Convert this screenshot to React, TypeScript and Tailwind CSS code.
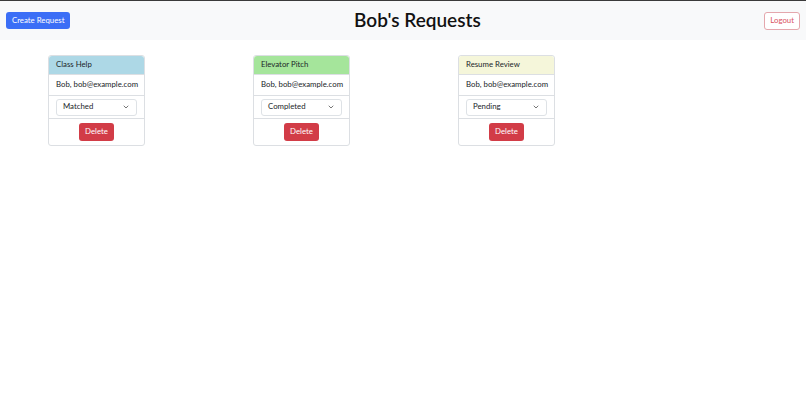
import { ChevronDown } from "lucide-react";

const requests = [
  { title: "Class Help", status: "Matched", header: "bg-[#add8e6]" },
  { title: "Elevator Pitch", status: "Completed", header: "bg-[#a5e59b]" },
  { title: "Resume Review", status: "Pending", header: "bg-[#f5f6da]" },
];

function RequestCard({ title, status, header }: { title: string; status: string; header: string }) {
  return (
    <div className="flex w-[97px] flex-col whitespace-nowrap rounded-[3px] border border-[#dcdfe3] bg-white text-[7.8px] text-[#212529]">
      <div className={`flex h-[19px] items-center rounded-t-[3px] border-b border-[#dcdfe3] px-[7px] ${header}`}>
        {title}
      </div>
      <div className="flex h-[21px] items-center border-b border-[#dcdfe3] px-[7px]">
        Bob, bob@example.com
      </div>
      <div className="flex h-[23px] items-center border-b border-[#dcdfe3] px-[7px]">
        <div className="flex h-[17px] w-full items-center justify-between rounded-[3px] border border-[#dee2e6] pl-[6px] pr-[6px]">
          <span>{status}</span>
          <ChevronDown size={8} strokeWidth={2.2} className="text-[#444]" />
        </div>
      </div>
      <div className="flex h-[26px] items-center justify-center">
        <button className="h-[18px] rounded-[3px] bg-[#d23c47] px-[6px] text-[7.8px] text-white">Delete</button>
      </div>
    </div>
  );
}

export default function App() {
  return (
    <div className="min-h-[419px] w-full bg-white" style={{ fontFamily: 'Lato, "Noto Sans", sans-serif' }}>
      <div className="flex h-[40px] items-center border-t-[1.5px] border-[#3a3a3a] bg-[#f8f9fa] px-[6px]">
        <button className="h-[17px] whitespace-nowrap rounded-[3px] bg-[#3b6ef6] px-[6px] text-[7.8px] text-white">
          Create Request
        </button>
        <h1 className="flex-1 text-center text-[19px] font-semibold text-[#111]">Bob's Requests</h1>
        <button className="h-[18px] rounded-[3px] border border-[#e4a7ad] bg-white px-[5px] text-[7.8px] text-[#d9535f]">
          Logout
        </button>
      </div>
      <div className="flex gap-[108px] pl-[48px] pt-[15px]">
        {requests.map((r) => (
          <RequestCard key={r.title} {...r} />
        ))}
      </div>
    </div>
  );
}
